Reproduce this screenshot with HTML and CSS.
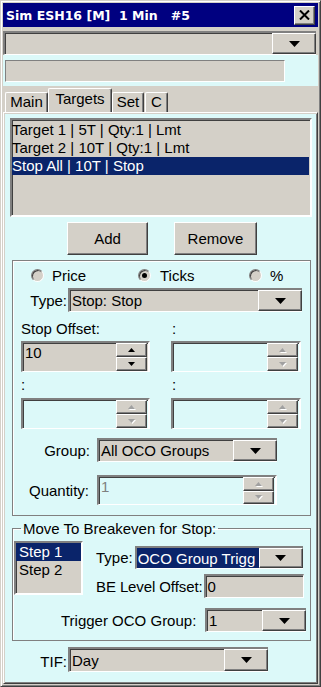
FILE: index.html
```html
<!DOCTYPE html>
<html lang="en">
<head>
	<meta charset="UTF-8">
	<meta name="viewport" content="width=device-width, initial-scale=1.0">
	<title>Sim ESH16 [M] 1 Min #5</title>
	<link rel="stylesheet" href="styles.css">
</head>
<body>
	<div class="window">
		<div class="titlebar">
			<span class="title">Sim ESH16 [M]  1 Min   #5</span>
			<div class="close raised">
				<svg width="11" height="10" viewBox="0 0 11 10"><path d="M1 0.5L10 9.5M10 0.5L1 9.5" stroke="#000" stroke-width="2"/></svg>
			</div>
		</div>

		<div class="combo top-combo">
			<span class="combo-text"></span>
			<span class="drop raised"><svg width="11" height="6" viewBox="0 0 11 6"><path d="M0 0h11L5.5 6z"/></svg></span>
		</div>

		<div class="strip">
			<div class="textbox blank"></div>
		</div>

		<div class="tabs">
			<div class="tab tab-main">Main</div>
			<div class="tab tab-targets active">Targets</div>
			<div class="tab tab-set">Set</div>
			<div class="tab tab-c">C</div>
		</div>

		<div class="panel">
			<div class="listbox targets">
				<div class="item">Target 1 | 5T | Qty:1 | Lmt</div>
				<div class="item">Target 2 | 10T | Qty:1 | Lmt</div>
				<div class="item selected">Stop All | 10T | Stop</div>
			</div>

			<div class="buttons">
				<div class="button raised add">Add</div>
				<div class="button raised remove">Remove</div>
			</div>

			<div class="group stop-group">
				<div class="radios">
					<div class="radio-item r-price"><span class="radio"></span>Price</div>
					<div class="radio-item r-ticks"><span class="radio checked"></span>Ticks</div>
					<div class="radio-item r-pct"><span class="radio"></span>%</div>
				</div>

				<div class="row type-row">
					<label class="lbl">Type:</label>
					<div class="combo type-combo">
						<span class="combo-text">Stop: Stop</span>
						<span class="drop raised"><svg width="11" height="6" viewBox="0 0 11 6"><path d="M0 0h11L5.5 6z"/></svg></span>
					</div>
				</div>

				<div class="offsets">
					<div class="offset">
						<div class="cap">Stop Offset:</div>
						<div class="spinner">
							<span class="spin-text">10</span>
							<span class="spin-btns">
								<span class="spin-btn raised"><svg width="7" height="4" viewBox="0 0 7 4"><path d="M0 4h7L3.5 0z"/></svg></span>
								<span class="spin-btn raised"><svg width="7" height="4" viewBox="0 0 7 4"><path d="M0 0h7L3.5 4z"/></svg></span>
							</span>
						</div>
					</div>
					<div class="offset">
						<div class="cap">:</div>
						<div class="spinner disabled">
							<span class="spin-text"></span>
							<span class="spin-btns">
								<span class="spin-btn raised"><svg width="7" height="4" viewBox="0 0 7 4"><path d="M0 4h7L3.5 0z"/></svg></span>
								<span class="spin-btn raised"><svg width="7" height="4" viewBox="0 0 7 4"><path d="M0 0h7L3.5 4z"/></svg></span>
							</span>
						</div>
					</div>
					<div class="offset">
						<div class="cap">:</div>
						<div class="spinner disabled">
							<span class="spin-text"></span>
							<span class="spin-btns">
								<span class="spin-btn raised"><svg width="7" height="4" viewBox="0 0 7 4"><path d="M0 4h7L3.5 0z"/></svg></span>
								<span class="spin-btn raised"><svg width="7" height="4" viewBox="0 0 7 4"><path d="M0 0h7L3.5 4z"/></svg></span>
							</span>
						</div>
					</div>
					<div class="offset">
						<div class="cap">:</div>
						<div class="spinner disabled">
							<span class="spin-text"></span>
							<span class="spin-btns">
								<span class="spin-btn raised"><svg width="7" height="4" viewBox="0 0 7 4"><path d="M0 4h7L3.5 0z"/></svg></span>
								<span class="spin-btn raised"><svg width="7" height="4" viewBox="0 0 7 4"><path d="M0 0h7L3.5 4z"/></svg></span>
							</span>
						</div>
					</div>
				</div>

				<div class="row group-row">
					<label class="lbl">Group:</label>
					<div class="combo group-combo">
						<span class="combo-text">All OCO Groups</span>
						<span class="drop raised"><svg width="11" height="6" viewBox="0 0 11 6"><path d="M0 0h11L5.5 6z"/></svg></span>
					</div>
				</div>

				<div class="row qty-row">
					<label class="lbl">Quantity:</label>
					<div class="spinner disabled qty">
						<span class="spin-text">1</span>
						<span class="spin-btns">
							<span class="spin-btn raised"><svg width="7" height="4" viewBox="0 0 7 4"><path d="M0 4h7L3.5 0z"/></svg></span>
							<span class="spin-btn raised"><svg width="7" height="4" viewBox="0 0 7 4"><path d="M0 0h7L3.5 4z"/></svg></span>
						</span>
					</div>
				</div>
			</div>

			<fieldset class="be-group">
				<legend>Move To Breakeven for Stop:</legend>
				<div class="be-top">
					<div class="listbox steps">
						<div class="item selected">Step 1</div>
						<div class="item">Step 2</div>
					</div>
					<div class="be-form">
						<div class="row be-type">
							<label class="lbl">Type:</label>
							<div class="combo be-combo">
								<span class="combo-text"><span class="hilite">OCO Group Trigg</span></span>
								<span class="drop raised"><svg width="11" height="6" viewBox="0 0 11 6"><path d="M0 0h11L5.5 6z"/></svg></span>
							</div>
						</div>
						<div class="row be-level">
							<label class="lbl">BE Level Offset:</label>
							<div class="textbox be-text">0</div>
						</div>
					</div>
				</div>
				<div class="row trigger-row">
					<label class="lbl">Trigger OCO Group:</label>
					<div class="combo trigger-combo">
						<span class="combo-text">1</span>
						<span class="drop raised"><svg width="11" height="6" viewBox="0 0 11 6"><path d="M0 0h11L5.5 6z"/></svg></span>
					</div>
				</div>
			</fieldset>

			<div class="row tif-row">
				<label class="lbl">TIF:</label>
				<div class="combo tif-combo">
					<span class="combo-text">Day</span>
					<span class="drop raised"><svg width="11" height="6" viewBox="0 0 11 6"><path d="M0 0h11L5.5 6z"/></svg></span>
				</div>
			</div>
		</div>
	</div>
</body>
</html>
```

FILE: styles.css
```css
:root {
    --face: #d4d0c8;
    --shadow: #808080;
    --dark: #404040;
    --cyan: #dcf9f9;
    --navy: #000080;
    --select: #0a246a;
}

* {
    box-sizing: border-box;
}

body {
    margin: 0;
    background: var(--face);
    font-family: "Liberation Sans", Arial, sans-serif;
    font-size: 15px;
    line-height: 17px;
    color: #000;
}

/* classic 3d edges */
.raised {
    background: var(--face);
    border: 1px solid;
    border-color: #fff var(--dark) var(--dark) #fff;
    box-shadow: inset -1px -1px var(--shadow);
}

.window {
    width: 321px;
    height: 687px;
    border: 1px solid;
    border-color: var(--face) var(--dark) var(--dark) var(--face);
    box-shadow: inset 1px 1px #fff, inset -1px -1px var(--shadow);
    padding: 2px;
    display: flex;
    flex-direction: column;
    overflow: hidden;
}

.titlebar {
    height: 24px;
    background: var(--navy);
    color: #fff;
    display: flex;
    align-items: center;
    padding-left: 3px;
    flex-shrink: 0;
}

.title {
    font-family: "DejaVu Sans", Verdana, sans-serif;
    font-weight: bold;
    font-size: 12.5px;
    white-space: pre;
}

.close {
    margin-left: auto;
    margin-right: 3px;
    width: 21px;
    height: 19px;
    display: flex;
    align-items: center;
    justify-content: center;
}

/* combo boxes */
.combo {
    display: flex;
    background: var(--face);
    border: 2px solid;
    border-color: var(--shadow) #fff #fff var(--shadow);
    box-shadow: inset 1px 1px var(--dark);
    border-right: 0;
    border-bottom-width: 1px;
}

.combo-text {
    flex: 1;
    padding: 0 0 0 2px;
    display: flex;
    align-items: center;
    white-space: nowrap;
    overflow: hidden;
}

.drop {
    width: 44px;
    display: flex;
    align-items: center;
    justify-content: center;
    flex-shrink: 0;
}

.top-combo {
    margin-top: 4px;
    width: 313px;
    height: 24px;
    flex-shrink: 0;
}

.strip {
    background: var(--cyan);
    height: 31px;
    padding: 5px 0 0 2px;
    flex-shrink: 0;
}

.textbox {
    background: var(--face);
    border: 1px solid;
    border-color: var(--shadow) #fff #fff var(--shadow);
}

.textbox.blank {
    width: 280px;
    height: 22px;
}

/* tabs */
.tabs {
    height: 26px;
    display: flex;
    align-items: flex-end;
    padding-left: 2px;
    flex-shrink: 0;
}

.tab {
    height: 20px;
    border: 1px solid;
    border-bottom: 0;
    border-color: #fff var(--dark) transparent #fff;
    box-shadow: inset -1px 0 var(--shadow);
    border-radius: 2px 2px 0 0;
    text-align: center;
    line-height: 18px;
}

.tab.active {
    height: 24px;
    line-height: 20px;
}

.tab-main { width: 43px; }
.tab-targets { width: 64px; }
.tab-set { width: 32px; }
.tab-c { width: 23px; margin-left: 1px; }

.panel {
    flex: 1;
    background: var(--cyan);
    border: 1px solid;
    border-color: #fff var(--dark) var(--dark) #fff;
    box-shadow: inset 1px 1px var(--face), inset -1px -1px var(--shadow);
    padding: 2px 2px 0 6px;
    display: flex;
    flex-direction: column;
}

/* list boxes */
.listbox {
    background: var(--face);
    border: 2px solid;
    border-color: var(--shadow) #fff #fff var(--shadow);
    box-shadow: inset 1px 1px var(--dark), inset -1px -1px var(--face);
    padding: 1px 1px 0 0;
}

.item {
    height: 18px;
    line-height: 18px;
    white-space: nowrap;
}

.item.selected {
    background: var(--select);
    color: #fff;
}

.targets {
    margin-top: 3px;
    width: 302px;
    height: 99px;
}

.buttons {
    display: flex;
    gap: 26px;
    padding-left: 57px;
    margin-top: 5px;
}

.button {
    height: 33px;
    display: flex;
    align-items: center;
    justify-content: center;
}

.add { width: 81px; }
.remove { width: 83px; }

/* group boxes */
.group {
    margin: 5px 0 0 2px;
    width: 299px;
    height: 256px;
    border: 1px solid var(--shadow);
    box-shadow: inset 1px 1px #fff;
    flex-shrink: 0;
}

.radios {
    display: flex;
    height: 20px;
    margin-top: 4px;
    padding-left: 18px;
    align-items: center;
}

.radio-item {
    display: flex;
    align-items: center;
    gap: 8px;
}

.r-price { width: 107px; }
.r-ticks { width: 111px; gap: 9px; }

.radio {
    width: 13px;
    height: 13px;
    border-radius: 50%;
    border: 1px solid;
    border-color: var(--shadow) #fff #fff var(--shadow);
    box-shadow: inset 1px 1px var(--dark);
    background: var(--face);
    display: flex;
    align-items: center;
    justify-content: center;
}

.radio.checked::after {
    content: "";
    width: 5px;
    height: 5px;
    border-radius: 50%;
    background: #000;
}

.row {
    display: flex;
    align-items: center;
}

.type-row {
    margin-top: 3px;
}

.type-row .lbl {
    width: 54px;
    text-align: right;
    margin-right: 1px;
}

.type-combo {
    width: 234px;
    height: 24px;
}

.offsets {
    display: grid;
    grid-template-columns: 129px 130px;
    column-gap: 21px;
    row-gap: 4px;
    padding-left: 8px;
    margin-top: 8px;
}

.cap {
    height: 17px;
    margin-bottom: 4px;
}

.offset:nth-child(2) .cap,
.offset:nth-child(4) .cap {
    padding-left: 1px;
}

.offset:nth-child(3) .cap,
.offset:nth-child(4) .cap {
    margin-bottom: 5px;
}

.spinner {
    display: flex;
    height: 31px;
    background: var(--face);
    border: 2px solid;
    border-color: var(--shadow) #fff #fff var(--shadow);
    border-bottom-width: 1px;
    box-shadow: inset 1px 1px var(--dark);
}

.spinner.disabled {
    background: var(--cyan);
    color: var(--shadow);
}

.spin-text {
    flex: 1;
    padding: 1px 0 0 2px;
}

.spin-btns {
    width: 31px;
    display: flex;
    flex-direction: column;
    margin-right: 1px;
}

.spin-btn {
    flex: 1;
    display: flex;
    align-items: center;
    justify-content: center;
}

.spinner.disabled .spin-btn svg {
    fill: #a0a0a0;
    filter: drop-shadow(1px 1px 0 #fff);
}

.group-row {
    margin-top: 9px;
}

.group-row .lbl,
.qty-row .lbl {
    width: 77px;
    text-align: right;
    margin-right: 7px;
}

.qty-row .lbl {
    width: 76px;
    margin-right: 8px;
}

.group-combo {
    width: 180px;
    height: 24px;
}

.qty-row {
    margin-top: 13px;
}

.spinner.qty {
    width: 180px;
    height: 30px;
}

/* breakeven */
.be-group {
    margin: 3px 0 0 2px;
    width: 299px;
    height: 122px;
    padding: 0;
    border: 1px solid var(--shadow);
    box-shadow: inset 1px 1px #fff;
    min-width: 0;
    flex-shrink: 0;
}

.be-group legend {
    margin-left: 8px;
    padding: 0 2px;
    line-height: 19px;
}

.be-top {
    display: flex;
    margin-top: 3px;
    padding-left: 1px;
}

.steps {
    width: 69px;
    height: 54px;
    padding: 0;
}

.steps .item {
    padding-left: 3px;
}

.be-form {
    padding-left: 13px;
}

.be-type {
    margin-top: 5px;
}

.be-type .lbl {
    margin-right: 2px;
}

.be-combo {
    width: 168px;
    height: 23px;
}

.hilite {
    background: var(--select);
    color: #fff;
    display: block;
    width: 100%;
    height: 100%;
    line-height: 21px;
    padding-left: 1px;
    overflow: hidden;
}

.be-type .combo-text {
    padding: 0;
}

.be-level {
    margin-top: 5px;
}

.be-level .lbl {
    margin-right: 1px;
    letter-spacing: -0.1px;
}

.be-text {
    width: 100px;
    height: 24px;
    border-width: 2px 1px 1px 2px;
    box-shadow: inset 1px 1px var(--dark);
    padding: 2px 0 0 2px;
}

.trigger-row {
    margin-top: 10px;
    padding-left: 48px;
}

.trigger-row .lbl {
    width: 144px;
    margin-right: 0;
}

.trigger-combo {
    width: 101px;
    height: 24px;
}

.tif-row {
    margin-top: 6px;
    align-items: flex-end;
}

.tif-row .lbl {
    width: 57px;
    text-align: right;
    margin-right: 1px;
    margin-bottom: 2px;
}

.tif-combo {
    width: 200px;
    height: 25px;
}
```
